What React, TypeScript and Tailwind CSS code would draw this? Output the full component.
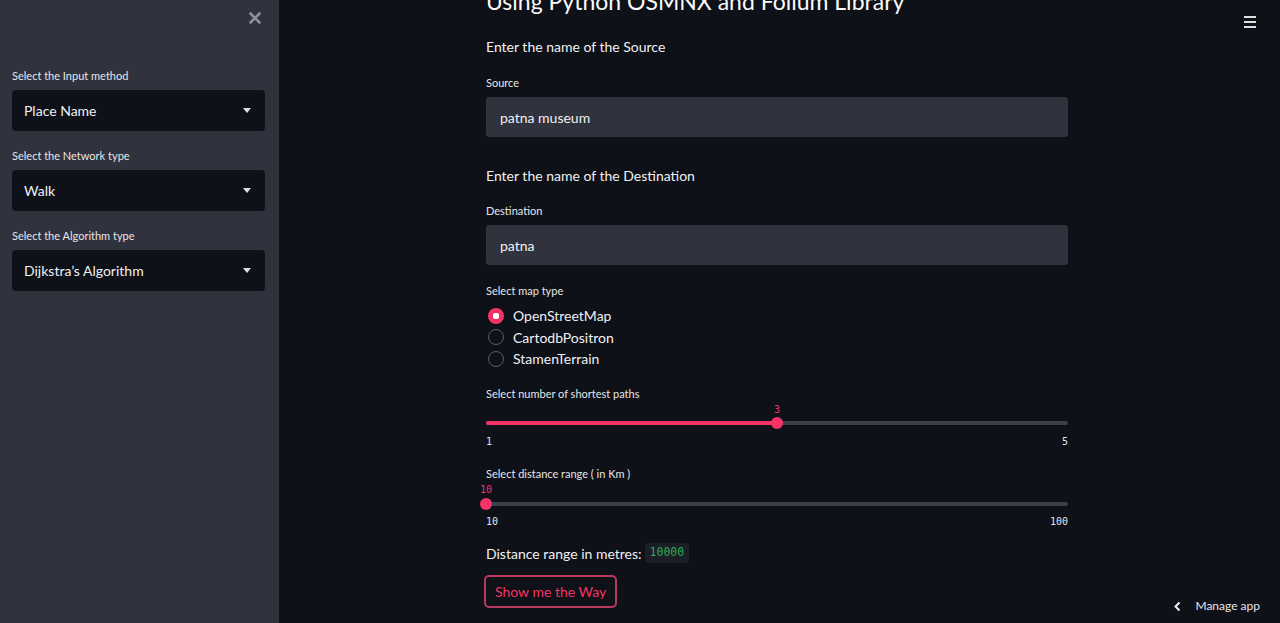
import React from "react";

const sans = { fontFamily: 'Lato, "Noto Sans", sans-serif' };

function Select({ label, value }: { label: string; value: string }) {
  return (
    <div className="flex flex-col">
      <div className="text-[11px] leading-[14px] text-[#e6e6ea] mb-[7px]">{label}</div>
      <div className="h-[41px] rounded-[4px] bg-[#0e1117] flex items-center justify-between pl-3 pr-[14px]">
        <span className="text-[14px] text-[#f0f0f3]">{value}</span>
        <svg width="8" height="5" viewBox="0 0 8 5"><path d="M0 0h8L4 5z" fill="#e0e0e0" /></svg>
      </div>
    </div>
  );
}

function Slider({ label, value, pct, min, max, valueLeft, trackTop }: { label: string; value: string; pct: number; min: string; max: string; valueLeft?: boolean; trackTop: number }) {
  return (
    <div className="flex flex-col">
      <div className="text-[11px] leading-[14px] text-[#e6e6ea]">{label}</div>
      <div className="relative h-[30px]">
        <div className="absolute left-0 right-0 h-[4px] rounded bg-[#3d3f4b]" style={{ top: trackTop }} />
        <div className="absolute left-0 h-[4px] rounded bg-[#f63366]" style={{ width: `${pct}%`, top: trackTop }} />
        <div className="absolute w-[12px] h-[12px] rounded-full bg-[#f63366]" style={{ left: `calc(${pct}% - 6px)`, top: trackTop - 4 }} />
        <div
          className="absolute top-[3px] text-[10px] leading-[12px] text-[#f63366] font-['DejaVu_Sans_Mono',monospace]"
          style={valueLeft ? { left: "-6px" } : { left: `calc(${pct}% - 3px)` }}
        >
          {value}
        </div>
      </div>
      <div className="flex justify-between mt-[5px] text-[10px] leading-[12px] text-[#e6e6ea] font-['DejaVu_Sans_Mono',monospace]">
        <span>{min}</span>
        <span>{max}</span>
      </div>
    </div>
  );
}

function Radio({ label, checked }: { label: string; checked?: boolean }) {
  return (
    <div className="flex items-center h-[21.5px]">
      {checked ? (
        <div className="ml-[2px] w-[16px] h-[16px] rounded-full bg-[#f63366] flex items-center justify-center">
          <div className="w-[6px] h-[6px] bg-white rounded-[2px]" />
        </div>
      ) : (
        <div className="ml-[2px] w-[16px] h-[16px] rounded-full border-[1.5px] border-[#5a5c64]" />
      )}
      <span className="ml-[9px] text-[14px] text-[#f0f0f3]">{label}</span>
    </div>
  );
}

export default function App() {
  return (
    <div className="w-[1280px] h-[623px] flex overflow-hidden bg-[#0e1117] relative" style={sans}>
      <aside className="w-[279px] h-full bg-[#30323d] pl-3 pr-[14px] pt-[12px] flex flex-col shrink-0">
        <div className="flex justify-end pr-[4px] h-[18px]">
          <svg width="12" height="12" viewBox="0 0 12 12"><path d="M1.5 1.5l9 9M10.5 1.5l-9 9" stroke="#8e9098" strokeWidth="2.6" strokeLinecap="round" /></svg>
        </div>
        <div className="mt-[39px] flex flex-col gap-[18px]">
          <Select label="Select the Input method" value="Place Name" />
          <Select label="Select the Network type" value="Walk" />
          <Select label="Select the Algorithm type" value="Dijkstra’s Algorithm" />
        </div>
      </aside>
      <main className="flex-1 h-full relative">
        <div className="w-[582px] ml-[207px] flex flex-col">
          <h1 className="mt-[-14px] text-[23px] leading-[30px] text-[#fafafa] font-normal">Using Python OSMNX and Folium Library</h1>
          <div className="mt-[21px] text-[14px] leading-[20px] text-[#f0f0f3]">Enter the name of the Source</div>
          <div className="mt-[19px] text-[11px] leading-[14px] text-[#e6e6ea]">Source</div>
          <div className="mt-[7px] h-[40px] rounded-[3px] bg-[#30323d] flex items-center px-[14px] text-[14px] text-[#f0f0f3]">patna museum</div>
          <div className="mt-[29px] text-[14px] leading-[20px] text-[#f0f0f3]">Enter the name of the Destination</div>
          <div className="mt-[18px] text-[11px] leading-[14px] text-[#e6e6ea]">Destination</div>
          <div className="mt-[7px] h-[40px] rounded-[3px] bg-[#30323d] flex items-center px-[14px] text-[14px] text-[#f0f0f3]">patna</div>
          <div className="mt-[19px] text-[11px] leading-[14px] text-[#e6e6ea]">Select map type</div>
          <div className="mt-[7px] flex flex-col">
            <Radio label="OpenStreetMap" checked />
            <Radio label="CartodbPositron" />
            <Radio label="StamenTerrain" />
          </div>
          <div className="mt-[17px]">
            <Slider label="Select number of shortest paths" value="3" pct={50} min="1" max="5" trackTop={20} />
          </div>
          <div className="mt-[19px]">
            <Slider label="Select distance range ( in Km )" value="10" pct={0} min="10" max="100" valueLeft trackTop={21} />
          </div>
          <div className="mt-[15px] flex items-center text-[14px] text-[#f0f0f3]">
            <span>Distance range in metres:</span>
            <span className="ml-[3px] px-[5px] h-[20px] flex items-center rounded-[3px] bg-[#1b1e26] text-[11.5px] text-[#2dab54] font-['DejaVu_Sans_Mono',monospace]">10000</span>
          </div>
          <div className="mt-[11px]">
            <button className="-ml-[2px] h-[33px] px-[9px] rounded-[5px] border-2 border-[#b9385d] text-[14px] text-[#f63366] bg-[#0e1117]">Show me the Way</button>
          </div>
        </div>
        <div className="absolute right-[24px] top-[16px] flex flex-col gap-[3px]">
          <div className="w-[12px] h-[2px] bg-[#e0e0e0]" />
          <div className="w-[12px] h-[2px] bg-[#e0e0e0]" />
          <div className="w-[12px] h-[2px] bg-[#e0e0e0]" />
        </div>
        <div className="absolute right-[20px] bottom-[8px] flex items-center gap-[14px] text-[12px] text-[#e6e6ea]">
          <svg width="7" height="11" viewBox="0 0 7 11"><path d="M5.5 1.5L1.5 5.5l4 4" stroke="#f0f0f0" strokeWidth="2" fill="none" /></svg>
          <span>Manage app</span>
        </div>
      </main>
    </div>
  );
}
